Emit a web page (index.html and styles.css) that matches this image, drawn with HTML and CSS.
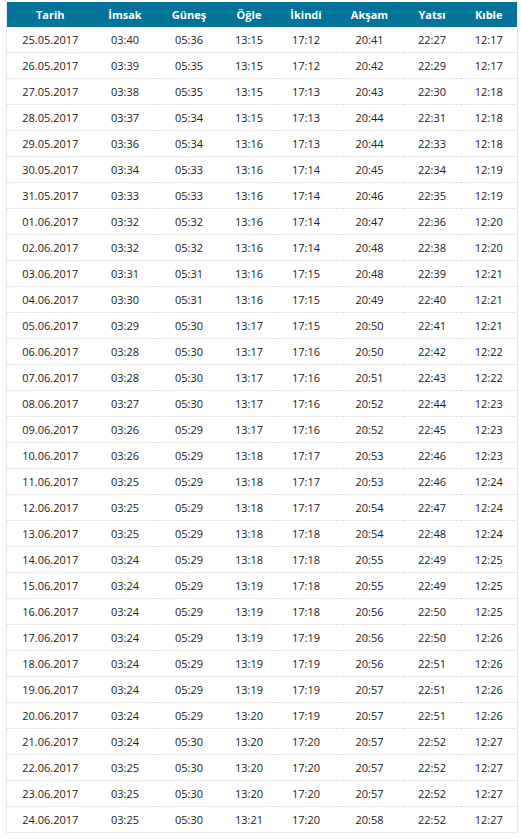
FILE: index.html
```html
<!DOCTYPE html>
<html lang="tr">
<head>
<meta charset="utf-8">
<link rel="stylesheet" href="styles.css">
</head>
<body>
<table class="times">
<colgroup>
<col class="c-date"><col class="c-imsak"><col class="c-gunes"><col class="c-ogle"><col class="c-ikindi"><col class="c-aksam"><col class="c-yatsi"><col class="c-kible">
</colgroup>
<thead>
<tr><th>Tarih</th><th>İmsak</th><th>Güneş</th><th>Öğle</th><th>İkindi</th><th>Akşam</th><th>Yatsı</th><th>Kıble</th></tr>
</thead>
<tbody>
<tr><td>25.05.2017</td><td>03:40</td><td>05:36</td><td>13:15</td><td>17:12</td><td>20:41</td><td>22:27</td><td>12:17</td></tr>
<tr><td>26.05.2017</td><td>03:39</td><td>05:35</td><td>13:15</td><td>17:12</td><td>20:42</td><td>22:29</td><td>12:17</td></tr>
<tr><td>27.05.2017</td><td>03:38</td><td>05:35</td><td>13:15</td><td>17:13</td><td>20:43</td><td>22:30</td><td>12:18</td></tr>
<tr><td>28.05.2017</td><td>03:37</td><td>05:34</td><td>13:15</td><td>17:13</td><td>20:44</td><td>22:31</td><td>12:18</td></tr>
<tr><td>29.05.2017</td><td>03:36</td><td>05:34</td><td>13:16</td><td>17:13</td><td>20:44</td><td>22:33</td><td>12:18</td></tr>
<tr><td>30.05.2017</td><td>03:34</td><td>05:33</td><td>13:16</td><td>17:14</td><td>20:45</td><td>22:34</td><td>12:19</td></tr>
<tr><td>31.05.2017</td><td>03:33</td><td>05:33</td><td>13:16</td><td>17:14</td><td>20:46</td><td>22:35</td><td>12:19</td></tr>
<tr><td>01.06.2017</td><td>03:32</td><td>05:32</td><td>13:16</td><td>17:14</td><td>20:47</td><td>22:36</td><td>12:20</td></tr>
<tr><td>02.06.2017</td><td>03:32</td><td>05:32</td><td>13:16</td><td>17:14</td><td>20:48</td><td>22:38</td><td>12:20</td></tr>
<tr><td>03.06.2017</td><td>03:31</td><td>05:31</td><td>13:16</td><td>17:15</td><td>20:48</td><td>22:39</td><td>12:21</td></tr>
<tr><td>04.06.2017</td><td>03:30</td><td>05:31</td><td>13:16</td><td>17:15</td><td>20:49</td><td>22:40</td><td>12:21</td></tr>
<tr><td>05.06.2017</td><td>03:29</td><td>05:30</td><td>13:17</td><td>17:15</td><td>20:50</td><td>22:41</td><td>12:21</td></tr>
<tr><td>06.06.2017</td><td>03:28</td><td>05:30</td><td>13:17</td><td>17:16</td><td>20:50</td><td>22:42</td><td>12:22</td></tr>
<tr><td>07.06.2017</td><td>03:28</td><td>05:30</td><td>13:17</td><td>17:16</td><td>20:51</td><td>22:43</td><td>12:22</td></tr>
<tr><td>08.06.2017</td><td>03:27</td><td>05:30</td><td>13:17</td><td>17:16</td><td>20:52</td><td>22:44</td><td>12:23</td></tr>
<tr><td>09.06.2017</td><td>03:26</td><td>05:29</td><td>13:17</td><td>17:16</td><td>20:52</td><td>22:45</td><td>12:23</td></tr>
<tr><td>10.06.2017</td><td>03:26</td><td>05:29</td><td>13:18</td><td>17:17</td><td>20:53</td><td>22:46</td><td>12:23</td></tr>
<tr><td>11.06.2017</td><td>03:25</td><td>05:29</td><td>13:18</td><td>17:17</td><td>20:53</td><td>22:46</td><td>12:24</td></tr>
<tr><td>12.06.2017</td><td>03:25</td><td>05:29</td><td>13:18</td><td>17:17</td><td>20:54</td><td>22:47</td><td>12:24</td></tr>
<tr><td>13.06.2017</td><td>03:25</td><td>05:29</td><td>13:18</td><td>17:18</td><td>20:54</td><td>22:48</td><td>12:24</td></tr>
<tr><td>14.06.2017</td><td>03:24</td><td>05:29</td><td>13:18</td><td>17:18</td><td>20:55</td><td>22:49</td><td>12:25</td></tr>
<tr><td>15.06.2017</td><td>03:24</td><td>05:29</td><td>13:19</td><td>17:18</td><td>20:55</td><td>22:49</td><td>12:25</td></tr>
<tr><td>16.06.2017</td><td>03:24</td><td>05:29</td><td>13:19</td><td>17:18</td><td>20:56</td><td>22:50</td><td>12:25</td></tr>
<tr><td>17.06.2017</td><td>03:24</td><td>05:29</td><td>13:19</td><td>17:19</td><td>20:56</td><td>22:50</td><td>12:26</td></tr>
<tr><td>18.06.2017</td><td>03:24</td><td>05:29</td><td>13:19</td><td>17:19</td><td>20:56</td><td>22:51</td><td>12:26</td></tr>
<tr><td>19.06.2017</td><td>03:24</td><td>05:29</td><td>13:19</td><td>17:19</td><td>20:57</td><td>22:51</td><td>12:26</td></tr>
<tr><td>20.06.2017</td><td>03:24</td><td>05:29</td><td>13:20</td><td>17:19</td><td>20:57</td><td>22:51</td><td>12:26</td></tr>
<tr><td>21.06.2017</td><td>03:24</td><td>05:30</td><td>13:20</td><td>17:20</td><td>20:57</td><td>22:52</td><td>12:27</td></tr>
<tr><td>22.06.2017</td><td>03:25</td><td>05:30</td><td>13:20</td><td>17:20</td><td>20:57</td><td>22:52</td><td>12:27</td></tr>
<tr><td>23.06.2017</td><td>03:25</td><td>05:30</td><td>13:20</td><td>17:20</td><td>20:57</td><td>22:52</td><td>12:27</td></tr>
<tr><td>24.06.2017</td><td>03:25</td><td>05:30</td><td>13:21</td><td>17:20</td><td>20:58</td><td>22:52</td><td>12:27</td></tr>
</tbody>
</table>
</body>
</html>
```
FILE: styles.css
```css
html, body {
  margin: 0;
  padding: 0;
  background: #fff;
}
body {
  padding: 2px 4px 0 6px;
  font-family: "Open Sans", "Liberation Sans", sans-serif;
  font-size: 11px;
  color: #222;
}
.times {
  width: 511px;
  table-layout: fixed;
  border-collapse: collapse;
  border: 1px solid #e8e8e8;
  border-top: 0;
}
.c-date { width: 87px; }
.c-imsak { width: 63px; }
.c-gunes { width: 65px; }
.c-ogle { width: 55px; }
.c-ikindi { width: 59px; }
.c-aksam { width: 68px; }
.c-yatsi { width: 57px; }
.c-kible { width: 57px; }
.times th {
  background: #03739a;
  color: #fff;
  font-weight: 700;
  height: 25px;
  padding: 0;
  text-align: center;
  vertical-align: middle;
}
.times td {
  height: 25px;
  padding: 0;
  text-align: center;
  vertical-align: middle;
  border-bottom: 1px dotted #d8d8d8;
}
.times tbody tr:last-child td {
  border-bottom: 1px solid #e8e8e8;
}
```
